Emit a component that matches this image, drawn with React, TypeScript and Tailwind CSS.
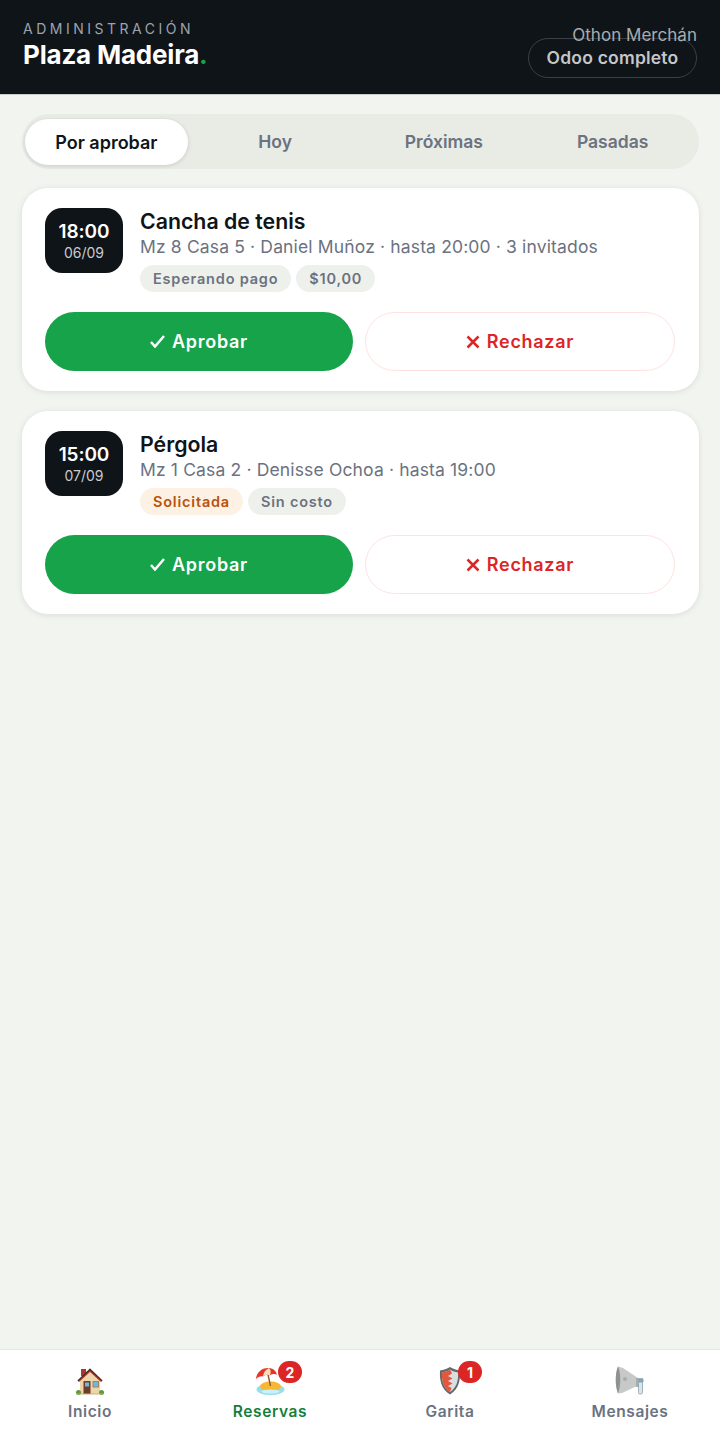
const tabs = ["Por aprobar", "Hoy", "Próximas", "Pasadas"];

type Tag = { label: string; tone: "gray" | "orange" };
type Booking = { time: string; date: string; title: string; meta: string; tags: Tag[] };

const bookings: Booking[] = [
  {
    time: "18:00",
    date: "06/09",
    title: "Cancha de tenis",
    meta: "Mz 8 Casa 5 · Daniel Muñoz · hasta 20:00 · 3 invitados",
    tags: [
      { label: "Esperando pago", tone: "gray" },
      { label: "$10,00", tone: "gray" },
    ],
  },
  {
    time: "15:00",
    date: "07/09",
    title: "Pérgola",
    meta: "Mz 1 Casa 2 · Denisse Ochoa · hasta 19:00",
    tags: [
      { label: "Solicitada", tone: "orange" },
      { label: "Sin costo", tone: "gray" },
    ],
  },
];

function HouseIcon() {
  return (
    <svg width="30" height="30" viewBox="0 0 30 30">
      <rect x="6" y="3" width="5" height="7" fill="#9c3d2e" />
      <path d="M5 14 15 5l10 9v14H5z" fill="#eed5a9" />
      <path d="M2.500 14.500 15 2.500l12.500 12-1.500 1.500L15 6 4 16z" fill="#b9352b" />
      <path d="M15 2.500 27.500 14.500l-.8.8L15 4.200 3.300 15.300l-.8-.8z" fill="#3f2a2a" />
      <rect x="8.500" y="15" width="7" height="13" fill="#6d3d28" />
      <rect x="10" y="16.500" width="4" height="4" fill="#6fb7e0" />
      <rect x="18" y="15.500" width="5.500" height="5.500" fill="#6fb7e0" stroke="#a5835a" />
      <circle cx="3.500" cy="26.500" r="2.500" fill="#5c9a35" />
      <circle cx="26.500" cy="26.500" r="2.500" fill="#5c9a35" />
      <rect x="2" y="27.500" width="26" height="1" fill="#c9ad80" />
    </svg>
  );
}

function BeachIcon() {
  return (
    <svg width="30" height="30" viewBox="0 0 30 30">
      <ellipse cx="15.500" cy="23.500" rx="14" ry="5.500" fill="#93dfee" />
      <ellipse cx="15.500" cy="20.500" rx="10.500" ry="5" fill="#f7b733" />
      <ellipse cx="15.500" cy="25.500" rx="9" ry="2" fill="#c9f1f6" />
      <path d="M12 4 15.500 20" stroke="#8a5a3a" strokeWidth="1.400" />
      <path d="M1 13C1.500 6.500 7 1.500 14 2c4.500.5 7 3 8 6.500-2.500-1-5-.8-7 .7-2.300-1-5-.5-7 1.300-2.500-.5-5 .5-7 2.500z" fill="#e5352b" />
      <path d="M8 10.500C8.500 6.500 10.500 3.500 14 2c2 2 2 4.500 1 7.200-2.300-1-5-.5-7 1.300z" fill="#f6dfb8" />
    </svg>
  );
}

function ShieldIcon() {
  return (
    <svg width="30" height="30" viewBox="0 0 30 30">
      <path d="M15 1C12 3 8.500 4 5 4.500 4.500 14 6 23 15 28.500 24 23 25.500 14 25 4.500 21.500 4 18 3 15 1z" fill="#66696b" />
      <path d="M15 3.500c-2.500 1.700-5 2.600-8 3C6.500 14 8 21.500 15 26c7-4.500 8.500-12 8-19.500-3-.4-5.500-1.300-8-3z" fill="#d7dfe2" />
      <path d="M15 3.500c-2.500 1.700-5 2.600-8 3C6.500 14 8 21.500 15 26l1.500-4-3.500-2 4.500-2.500-4.500-2.500 4.500-2.500-4.500-2.500 4-2.500z" fill="#e4573f" />
    </svg>
  );
}

function MegaphoneIcon() {
  return (
    <svg width="30" height="30" viewBox="0 0 30 30">
      <path d="M3 .500 8 2l15 10-1 8L7 27l-4 .500C0 20 0 8 3 .500z" fill="#c6c9c7" />
      <path d="M3 .500c3 7 3 19 0 27-3-8-3-20 0-27z" fill="#8d9190" />
      <circle cx="10" cy="13" r="2" fill="#a9adab" />
      <path d="M21 12h7v5l-3 4h-4z" fill="#a9adab" />
      <rect x="23" y="13" width="5.500" height="3" fill="#7ba7c9" />
      <rect x="23.500" y="16" width="4" height="12" rx="1.500" fill="#dbe4e8" stroke="#8aa2b1" strokeWidth=".8" />
    </svg>
  );
}

const navItems = [
  { label: "Inicio", icon: <HouseIcon />, badge: null, active: false },
  { label: "Reservas", icon: <BeachIcon />, badge: 2, active: true },
  { label: "Garita", icon: <ShieldIcon />, badge: 1, active: false },
  { label: "Mensajes", icon: <MegaphoneIcon />, badge: null, active: false },
];

function BookingCard({ booking }: { booking: Booking }) {
  return (
    <article className="h-[203px] rounded-[26px] bg-white pt-5 pr-[24px] pl-[23px] shadow-[0_1px_6px_rgba(15,20,25,0.1)]">
      <div className="flex gap-[17px]">
        <div className="flex h-[65px] w-[78px] shrink-0 flex-col items-center justify-center rounded-[17px] bg-[#0f1419] text-white">
          <span className="text-[19px] leading-[24px] font-semibold tracking-[-0.1px]">{booking.time}</span>
          <span className="text-[14px] leading-[18px] text-[#c9cbcd]">{booking.date}</span>
        </div>
        <div className="min-w-0 flex-1">
          <h2 className="text-[21.300px] leading-[27px] font-semibold text-[#0f1419]">{booking.title}</h2>
          <p className="text-[17.500px] leading-[24px] tracking-[0.15px] whitespace-nowrap text-[#6b7280]">{booking.meta}</p>
          <div className="mt-[6px] flex gap-[5px]">
            {booking.tags.map((tag) => (
              <span
                key={tag.label}
                className={
                  tag.tone === "orange"
                    ? "rounded-full bg-[#fdf1e3] px-[13px] text-[14.500px] leading-[27px] font-semibold tracking-[0.8px] text-[#b8520d]"
                    : "rounded-full bg-[#eef0ec] px-[13px] text-[14.500px] leading-[27px] font-semibold tracking-[0.8px] text-[#6b7280]"
                }
              >
                {tag.label}
              </span>
            ))}
          </div>
        </div>
      </div>
      <div className="mt-[20px] flex gap-3">
        <button
          type="button"
          className="flex h-[59px] w-[308px] items-center justify-center gap-[7px] rounded-full bg-[#16a34a] text-[18px] font-semibold tracking-[0.7px] text-white"
        >
          <svg width="15" height="13" viewBox="0 0 15 13" fill="none" stroke="white" strokeWidth="2.500">
            <path d="M1 7l4 4.500L14 1" />
          </svg>
          Aprobar
        </button>
        <button
          type="button"
          className="flex h-[59px] flex-1 items-center justify-center gap-[7px] rounded-full border border-[#fee2e2] bg-white text-[18px] font-semibold tracking-[0.7px] text-[#dc2626]"
        >
          <svg width="14" height="14" viewBox="0 0 14 14" fill="none" stroke="#dc2626" strokeWidth="2.500">
            <path d="M1.500 1.500l11 11M12.500 1.500l-11 11" />
          </svg>
          Rechazar
        </button>
      </div>
    </article>
  );
}

export default function App() {
  return (
    <div className="flex h-[1440px] w-[720px] flex-col bg-[#f2f4ef] font-['Inter',sans-serif]">
      <header className="flex h-[95px] shrink-0 justify-between border-b border-[#c9cdc5] bg-[#0f1419] pr-[23px] pl-[23px]">
        <div className="pt-[20px]">
          <p className="text-[14px] leading-[18px] font-normal tracking-[3.500px] text-[#9ca3af]">ADMINISTRACIÓN</p>
          <h1 className="text-[26px] leading-[33px] font-bold tracking-[-0.2px] text-white">
            Plaza Madeira<span className="text-[#16a34a]">.</span>
          </h1>
        </div>
        <div className="relative flex flex-col items-end pt-[38px]">
          <span className="absolute top-[24px] right-0 text-[17px] leading-[22px] tracking-[0.03px] text-[#a9acae]">Othon Merchán</span>
          <span className="flex h-[40px] w-[169px] items-center justify-center rounded-full border border-[#3a4045] text-[17.500px] font-semibold tracking-[0.2px] text-[#c4c6c8]">
            Odoo completo
          </span>
        </div>
      </header>

      <main className="flex-1 px-[22px] pt-[19px]">
        <div className="grid h-[55px] w-[677px] grid-cols-4 rounded-full bg-[#e9ebe5] pt-[5px] pr-[2px] pb-[4px]">
          {tabs.map((tab, i) => (
            <span
              key={tab}
              className={
                i === 0
                  ? "mx-[3px] flex items-center justify-center rounded-full bg-white text-[18px] font-semibold text-[#0f1419] shadow-[0_1px_4px_rgba(15,20,25,0.14)]"
                  : "flex items-center justify-center text-[17.500px] font-semibold text-[#6b7280]"
              }
            >
              {tab}
            </span>
          ))}
        </div>

        <div className="mt-[19px] flex w-[677px] flex-col gap-5">
          {bookings.map((booking) => (
            <BookingCard key={booking.title} booking={booking} />
          ))}
        </div>
      </main>

      <nav className="grid h-[91px] shrink-0 grid-cols-4 border-t border-[#e6e8e3] bg-white">
        {navItems.map((item) => (
          <div key={item.label} className="flex flex-col items-center pt-4">
            <div className="relative h-[30px] w-[30px]">
              {item.icon}
              {item.badge !== null && (
                <span className="absolute -top-[5px] -right-[17px] flex h-[22px] min-w-[24px] items-center justify-center rounded-full bg-[#dc2626] px-[7px] text-[14px] font-bold text-white">
                  {item.badge}
                </span>
              )}
            </div>
            <span
              className={
                item.active
                  ? "mt-[6px] text-[15.500px] leading-[20px] font-semibold tracking-[0.6px] text-[#15803d]"
                  : "mt-[6px] text-[15.500px] leading-[20px] font-semibold tracking-[0.6px] text-[#6b7280]"
              }
            >
              {item.label}
            </span>
          </div>
        ))}
      </nav>
    </div>
  );
}
